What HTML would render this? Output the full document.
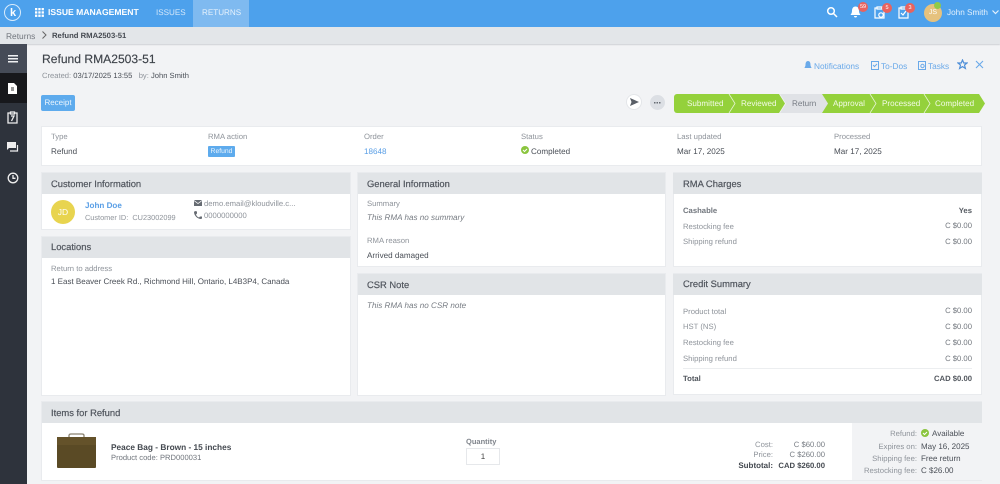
<!DOCTYPE html>
<html><head><meta charset="utf-8"><style>
html,body{margin:0;padding:0}
body{width:1000px;height:484px;position:relative;overflow:hidden;background:#f2f3f5;font-family:"Liberation Sans",sans-serif;color:#4a4f57;font-size:8.100px;text-rendering:geometricPrecision}
.a{position:absolute}
.t{position:absolute;white-space:nowrap;line-height:12px}
.s{font-size:7.700px}
.l{color:#8e939a}
.r{text-align:right}
.card{position:absolute;background:#fff;box-shadow:0 0 0 1px #e9ebee}
.h{position:absolute;background:#e1e4e7;height:21px;line-height:21px;font-size:9.400px;color:#50555d;padding-left:9px;box-sizing:border-box;-webkit-text-stroke:.2px #50555d}
.lnk{color:#6aa9e9;font-size:8.300px}
svg{position:absolute;display:block}
.b{position:absolute;width:10px;height:10px;border-radius:50%;background:#e8635f;color:#fff;font-size:5.500px;line-height:10px;text-align:center}
.g{color:#f2fae6}
</style></head><body>
<!-- top bar -->
<div class="a" style="left:0;top:0;width:1000px;height:27px;background:#4da1ec"></div>
<div class="a" style="left:193px;top:0;width:56px;height:27px;background:#7fbaf0"></div>
<div class="a" style="left:4px;top:4px;width:17px;height:17px;box-sizing:border-box;border-radius:50%;border:1px solid #d8ebfb"></div>
<div class="t" style="left:10px;top:7px;color:#fff;font-weight:bold;font-size:11px">k</div>
<svg style="left:35px;top:8px" width="9" height="9" fill="#fff"><rect width="2.300" height="2.300"/><rect x="3.300" width="2.300" height="2.300"/><rect x="6.600" width="2.300" height="2.300"/><rect y="3.300" width="2.300" height="2.300"/><rect x="3.300" y="3.300" width="2.300" height="2.300"/><rect x="6.600" y="3.300" width="2.300" height="2.300"/><rect y="6.600" width="2.300" height="2.300"/><rect x="3.300" y="6.600" width="2.300" height="2.300"/><rect x="6.600" y="6.600" width="2.300" height="2.300"/></svg>
<div class="t" style="left:48px;top:6px;color:#fff;font-size:8.600px;font-weight:bold">ISSUE MANAGEMENT</div>
<div class="t" style="left:156px;top:7px;color:#d5e8fa;font-size:8.100px">ISSUES</div>
<div class="t" style="left:202px;top:7px;color:#e6f2fc;font-size:8.100px">RETURNS</div>
<!-- top right -->
<svg style="left:826px;top:6px" width="12" height="12" fill="none" stroke="#fff" stroke-width="1.500"><circle cx="5" cy="5" r="3.300"/><path d="M7.500 7.500 11 11"/></svg>
<svg style="left:850px;top:6px" width="11" height="12" fill="#fff"><path d="M5.500 .5C3 .5 2 2.500 2 5c0 2-1 3-1.500 4h10C10 8 9 7 9 5 9 2.500 8 .5 5.500 .5zM4 10h3a1.500 1.500 0 0 1-3 0z"/></svg>
<div class="b" style="left:858px;top:2px">59</div>
<svg style="left:874px;top:6px" width="11" height="13" fill="none" stroke="#fff" stroke-width="1.200"><path d="M3 2H1v10h9V2H8M3 1h5v2H3z"/><circle cx="7" cy="9" r="2.200"/></svg>
<div class="b" style="left:882px;top:3px">5</div>
<svg style="left:898px;top:6px" width="11" height="13" fill="none" stroke="#fff" stroke-width="1.200"><path d="M3 2H1v10h9V2H8M3 1h5v2H3zM3 7l2 2 3-4"/></svg>
<div class="b" style="left:905px;top:3px">3</div>
<div class="a" style="left:924px;top:4px;width:18px;height:18px;border-radius:50%;background:#e6c27e;color:#fff;font-size:7px;line-height:18px;text-align:center">JS</div>
<div class="a" style="left:934px;top:2px;width:7px;height:7px;border-radius:50%;background:#8fca4a"></div>
<div class="t" style="left:947px;top:7px;color:#e3f0fc;font-size:8.200px">John Smith</div>
<svg style="left:992px;top:10px" width="7" height="5" fill="none" stroke="#e3f0fc" stroke-width="1.200"><path d="M.5 .5 3.500 3.500 6.500 .5"/></svg>
<!-- breadcrumb -->
<div class="a" style="left:0;top:27px;width:1000px;height:17px;background:#e3e6e9;box-shadow:0 1px 1px #cfd2d6"></div>
<div class="t" style="left:6px;top:30px;color:#71767d;font-size:8.400px">Returns</div>
<svg style="left:42px;top:31px" width="5" height="8" fill="none" stroke="#666" stroke-width="1"><path d="M.5 .5 4 4 .5 7.500"/></svg>
<div class="t" style="left:52px;top:30px;color:#444950;font-weight:bold;font-size:7.700px">Refund RMA2503-51</div>
<!-- sidebar -->
<div class="a" style="left:0;top:44px;width:27px;height:440px;background:#2e333c"></div>
<div class="a" style="left:0;top:44px;width:27px;height:29px;background:#454b57"></div>
<div class="a" style="left:0;top:73px;width:27px;height:30px;background:#17181c"></div>
<svg style="left:8px;top:55px" width="11" height="8" fill="#f0f1f3"><rect width="10" height="1.500"/><rect y="3" width="10" height="1.500"/><rect y="6" width="10" height="1.500"/></svg>
<svg style="left:8px;top:83px" width="10" height="11"><path d="M0 0h6l3 3v8H0z" fill="#fff"/><path d="M3 5h3M3 7h3" stroke="#333" stroke-width="1"/></svg>
<svg style="left:7px;top:111px" width="12" height="13" fill="none" stroke="#eee" stroke-width="1.300"><path d="M3.500 2H1v10h9V2H7.500M3.500 1h4v2h-4zM4 5h3L4.500 10"/></svg>
<svg style="left:7px;top:142px" width="12" height="12"><path d="M0 0h9v6H2L0 8z" fill="#eee"/><path d="M10.500 3v6H3" fill="none" stroke="#eee" stroke-width="1.200"/></svg>
<svg style="left:7px;top:172px" width="12" height="12" fill="none" stroke="#eee" stroke-width="1.300"><circle cx="6" cy="6" r="4.800"/><path d="M6 3v3.300h2.500"/></svg>
<!-- header -->
<div class="t" style="left:42px;top:51px;font-size:12.100px;line-height:16px;color:#3f444b;-webkit-text-stroke:.15px #3f444b">Refund RMA2503-51</div>
<div class="t" style="left:42px;top:70px;font-size:7.600px"><span class="l">Created:</span> 03/17/2025 13:55 &nbsp; <span class="l">by:</span> John Smith</div>
<div class="a" style="left:41px;top:95px;width:34px;height:16px;background:#5eabed;border-radius:2px;color:#e9f4fd;font-size:8px;line-height:16px;text-align:center">Receipt</div>
<svg style="left:804px;top:60px" width="8" height="10" fill="#6aa9e9"><path d="M4 1C2 1 1.500 3 1.500 5 1.500 6.500.5 7 .5 8h7c0-1-1-1.500-1-3C6.500 3 6 1 4 1z"/></svg>
<div class="t lnk" style="left:814px;top:60px">Notifications</div>
<svg style="left:871px;top:60px" width="8" height="10" fill="none" stroke="#6aa9e9"><path d="M.5 1.500h7v8h-7zM2 5l1.500 1.500L6 4"/></svg>
<div class="t lnk" style="left:881px;top:60px">To-Dos</div>
<svg style="left:918px;top:60px" width="8" height="10" fill="none" stroke="#6aa9e9"><path d="M.5 1.500h7v8h-7z"/><circle cx="4.500" cy="6" r="1.700"/></svg>
<div class="t lnk" style="left:928px;top:60px">Tasks</div>
<svg style="left:957px;top:59px" width="11" height="11" fill="none" stroke="#4f8fd8" stroke-width="1.200"><path d="M5.500 1l1.300 3h3.200l-2.500 2.100.9 3.300-2.900-1.800-2.900 1.800.9-3.300L1 4h3.200z"/></svg>
<svg style="left:975px;top:60px" width="9" height="9" fill="none" stroke="#6aa9e9" stroke-width="1.100"><path d="M1 1l7 7M8 1L1 8"/></svg>
<!-- action icons -->
<div class="a" style="left:627px;top:95px;width:14px;height:14px;border-radius:50%;background:#fff;box-shadow:0 0 0 1px #e4e6e9"></div>
<svg style="left:630px;top:98px" width="9" height="8" fill="#5a5f67"><path d="M0 0l9 4-9 4 1.500-4z"/></svg>
<div class="a" style="left:650px;top:95px;width:15px;height:15px;border-radius:50%;background:#dcdfe4"></div>
<svg style="left:654px;top:102px" width="8" height="2" fill="#666b72"><rect width="1.500" height="1.500"/><rect x="2.500" width="1.500" height="1.500"/><rect x="5" width="1.500" height="1.500"/></svg>
<!-- progress -->
<svg style="left:674px;top:94px" width="312" height="19">
<path d="M3 0H55l6 9.500-6 9.500H3a3 3 0 0 1-3-3V3a3 3 0 0 1 3-3z" fill="#94d13b"/>
<path d="M55 0h50l6 9.500-6 9.500H55l6-9.500z" fill="#94d13b"/>
<path d="M106 0h42l6 9.500-6 9.500h-42l6-9.500z" fill="#e0e2e6"/>
<path d="M148 0h48l6 9.500-6 9.500h-48l6-9.500z" fill="#94d13b"/>
<path d="M196 0h54l6 9.500-6 9.500h-54l6-9.500z" fill="#94d13b"/>
<path d="M250 0h55l6 9.500-6 9.500h-55l6-9.500z" fill="#94d13b"/>
<path d="M55 0l6 9.500-6 9.500M196 0l6 9.500-6 9.500M250 0l6 9.500-6 9.500" fill="none" stroke="#e6f4d2" stroke-width=".8"/>
</svg>
<div class="t g" style="left:687px;top:98px">Submitted</div>
<div class="t g" style="left:741px;top:98px">Reviewed</div>
<div class="t" style="left:792px;top:98px;color:#777c84">Return</div>
<div class="t g" style="left:833px;top:98px">Approval</div>
<div class="t g" style="left:882px;top:98px">Processed</div>
<div class="t g" style="left:935px;top:98px">Completed</div>
<!-- info strip -->
<div class="card" style="left:42px;top:127px;width:939px;height:38px"></div>
<div class="t l s" style="left:51px;top:131px">Type</div>
<div class="t" style="left:51px;top:146px">Refund</div>
<div class="t l s" style="left:208px;top:131px">RMA action</div>
<div class="a" style="left:208px;top:146px;width:27px;height:11px;background:#5eabed;border-radius:1px;color:#eaf4fd;font-size:6.800px;line-height:11px;text-align:center">Refund</div>
<div class="t l s" style="left:364px;top:131px">Order</div>
<div class="t" style="left:364px;top:146px;color:#5a9fe6">18648</div>
<div class="t l s" style="left:521px;top:131px">Status</div>
<svg style="left:521px;top:146px" width="8" height="8"><circle cx="4" cy="4" r="4" fill="#8bc53f"/><path d="M2 4l1.500 1.500L6 3" fill="none" stroke="#fff"/></svg>
<div class="t" style="left:531px;top:146px">Completed</div>
<div class="t l s" style="left:677px;top:131px">Last updated</div>
<div class="t" style="left:677px;top:146px">Mar 17, 2025</div>
<div class="t l s" style="left:834px;top:131px">Processed</div>
<div class="t" style="left:834px;top:146px">Mar 17, 2025</div>
<!-- customer -->
<div class="card" style="left:42px;top:173px;width:308px;height:56px"></div>
<div class="h" style="left:42px;top:173px;width:308px">Customer Information</div>
<div class="a" style="left:51px;top:200px;width:24px;height:24px;border-radius:50%;background:#e8d44f;color:#fff;font-size:8.500px;line-height:24px;text-align:center">JD</div>
<div class="t" style="left:85px;top:200px;font-size:8.100px;font-weight:bold;color:#5a9fe6">John Doe</div>
<div class="t l" style="left:85px;top:212px;font-size:7.350px">Customer ID: &nbsp;CU23002099</div>
<svg style="left:194px;top:200px" width="8" height="6"><rect width="8" height="6" fill="#666b72"/><path d="M0 .5l4 3 4-3" fill="none" stroke="#fff" stroke-width=".7"/></svg>
<div class="t l s" style="left:204px;top:198px">demo.email@kloudville.c...</div>
<svg style="left:194px;top:211px" width="8" height="8" fill="#666b72"><path d="M1 0l2 .5v2L2 3.500C2.500 5 3.500 6 5 6.500L6 5.500h2V7.500L7 8C3.500 8 0 4.500 0 1z"/></svg>
<div class="t l s" style="left:204px;top:210px">0000000000</div>
<!-- locations -->
<div class="card" style="left:42px;top:237px;width:308px;height:158px"></div>
<div class="h" style="left:42px;top:237px;width:308px;line-height:20px">Locations</div>
<div class="t l s" style="left:51px;top:263px">Return to address</div>
<div class="t" style="left:51px;top:276px;font-size:8px">1 East Beaver Creek Rd., Richmond Hill, Ontario, L4B3P4, Canada</div>
<!-- general -->
<div class="card" style="left:358px;top:173px;width:307px;height:93px"></div>
<div class="h" style="left:358px;top:173px;width:307px">General Information</div>
<div class="t l s" style="left:367px;top:198px">Summary</div>
<div class="t" style="left:367px;top:212px;font-style:italic;color:#777c83">This RMA has no summary</div>
<div class="t l s" style="left:367px;top:235px">RMA reason</div>
<div class="t" style="left:367px;top:250px">Arrived damaged</div>
<!-- CSR -->
<div class="card" style="left:358px;top:274px;width:307px;height:121px"></div>
<div class="h" style="left:358px;top:274px;width:307px">CSR Note</div>
<div class="t" style="left:367px;top:300px;font-style:italic;color:#777c83">This RMA has no CSR note</div>
<!-- RMA charges -->
<div class="card" style="left:674px;top:173px;width:307px;height:93px"></div>
<div class="h" style="left:673px;top:173px;width:309px;padding-left:10px">RMA Charges</div>
<div class="t s" style="left:683px;top:205px;font-weight:bold;color:#71767d">Cashable</div>
<div class="t r s" style="right:28px;top:205px;font-weight:bold;color:#555a61">Yes</div>
<div class="t l s" style="left:683px;top:221px">Restocking fee</div>
<div class="t r s" style="right:28px;top:220px;color:#71767d">C $0.00</div>
<div class="t l s" style="left:683px;top:236px">Shipping refund</div>
<div class="t r s" style="right:28px;top:236px;color:#71767d">C $0.00</div>
<!-- Credit -->
<div class="card" style="left:674px;top:274px;width:307px;height:120px"></div>
<div class="h" style="left:673px;top:274px;width:309px;padding-left:10px;line-height:20px">Credit Summary</div>
<div class="t l s" style="left:683px;top:306px">Product total</div>
<div class="t r s" style="right:28px;top:305px;color:#71767d">C $0.00</div>
<div class="t l s" style="left:683px;top:321px">HST (NS)</div>
<div class="t r s" style="right:28px;top:321px;color:#71767d">C $0.00</div>
<div class="t l s" style="left:683px;top:337px">Restocking fee</div>
<div class="t r s" style="right:28px;top:337px;color:#71767d">C $0.00</div>
<div class="t l s" style="left:683px;top:353px">Shipping refund</div>
<div class="t r s" style="right:28px;top:353px;color:#71767d">C $0.00</div>
<div class="a" style="left:683px;top:368px;width:289px;height:1px;background:#eceef0"></div>
<div class="t s" style="left:683px;top:373px;font-weight:bold;color:#50555c">Total</div>
<div class="t r s" style="right:28px;top:373px;font-weight:bold;color:#50555c">CAD $0.00</div>
<!-- items -->
<div class="card" style="left:42px;top:402px;width:939px;height:78px"></div>
<div class="h" style="left:42px;top:402px;width:940px">Items for Refund</div>
<div class="a" style="left:852px;top:423px;width:130px;height:57px;background:#f2f3f5"></div>
<svg style="left:56px;top:433px" width="41" height="36"><path d="M13 5V2.500Q13 1 15 1H26Q28 1 28 2.500V5" fill="none" stroke="#8a8270" stroke-width="1.300"/><rect x="1" y="4" width="39" height="31" rx="1" fill="#5a4a25"/><path d="M1 4h39v8H1z" fill="#64522a"/></svg>
<div class="t" style="left:111px;top:441px;font-size:8.300px;font-weight:bold;color:#444950">Peace Bag - Brown - 15 inches</div>
<div class="t" style="left:111px;top:452px;font-size:7.600px;color:#71767d">Product code: PRD000031</div>
<div class="t" style="left:466px;top:436px;font-size:7.500px;font-weight:bold;color:#80858c">Quantity</div>
<div class="a" style="left:466px;top:448px;width:34px;height:17px;box-sizing:border-box;border:1px solid #e6e8eb;color:#444;font-size:8px;line-height:16px;text-align:center">1</div>
<div class="t l r s" style="right:227px;top:439px">Cost:</div>
<div class="t r s" style="right:175px;top:439px;color:#777c83">C $60.00</div>
<div class="t l r s" style="right:227px;top:449px">Price:</div>
<div class="t r s" style="right:175px;top:449px;color:#777c83">C $260.00</div>
<div class="t r" style="right:227px;top:460px;font-size:8px;font-weight:bold;color:#444950">Subtotal:</div>
<div class="t r s" style="right:175px;top:460px;font-weight:bold;color:#444950">CAD $260.00</div>
<div class="t l r s" style="right:83px;top:428px">Refund:</div>
<svg style="left:921px;top:429px" width="8" height="8"><circle cx="4" cy="4" r="4" fill="#8bc53f"/><path d="M2 4l1.500 1.500L6 3" fill="none" stroke="#fff"/></svg>
<div class="t" style="left:932px;top:428px;font-size:8px">Available</div>
<div class="t l r s" style="right:83px;top:441px">Expires on:</div>
<div class="t" style="left:921px;top:441px;font-size:8px">May 16, 2025</div>
<div class="t l r s" style="right:83px;top:453px">Shipping fee:</div>
<div class="t" style="left:921px;top:453px;font-size:8px">Free return</div>
<div class="t l r s" style="right:83px;top:465px">Restocking fee:</div>
<div class="t" style="left:921px;top:465px;font-size:8px">C $26.00</div>
</body></html>
